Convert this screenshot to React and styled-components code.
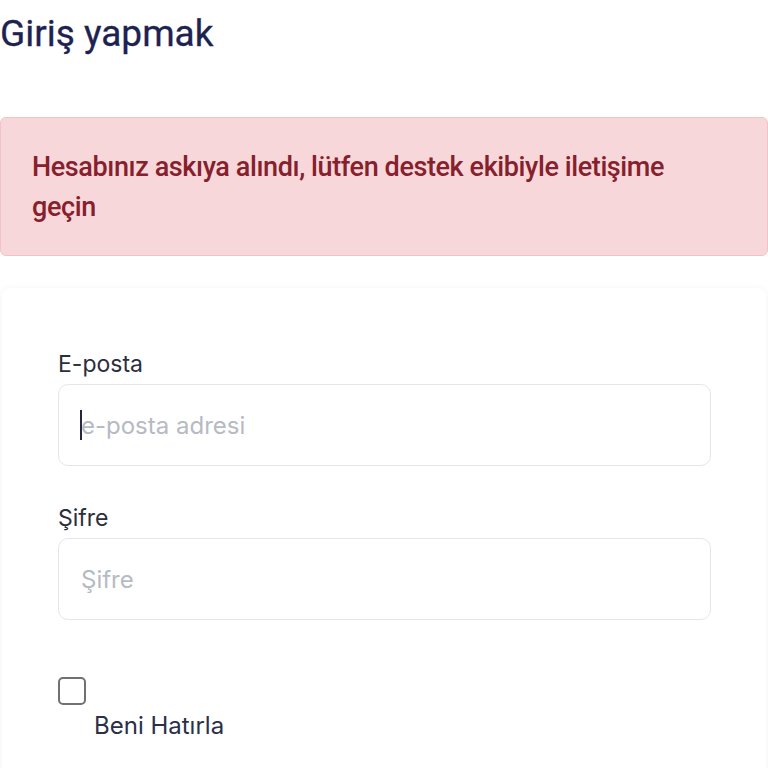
import React from "react";
import styled, { createGlobalStyle } from "styled-components";

const Global = createGlobalStyle`
  html, body { margin: 0; padding: 0; background: #ffffff; }
  body { font-family: Roboto, "Liberation Sans", sans-serif; }
  * { box-sizing: border-box; }
`;

const Page = styled.div`
  width: 768px;
  display: flex;
  flex-direction: column;
`;

const Title = styled.h1`
  margin: 14px 0 0 0;
  font-family: Roboto, "Liberation Sans", sans-serif;
  font-weight: 400;
  font-size: 37px;
  line-height: 40px;
  color: #1d2351;
  -webkit-text-stroke: 0.3px #1d2351;
`;

const Alert = styled.div`
  margin-top: 63px;
  padding: 29px 90px 28px 31px;
  background: #f8d7da;
  border: 1px solid #f3c2c6;
  border-radius: 6px;
  color: #86202d;
  font-family: Roboto, "Liberation Sans", sans-serif;
  font-weight: 500;
  font-size: 27px;
  line-height: 40px;
  letter-spacing: -0.4px;
`;

const Card = styled.div`
  margin: 32px 2px 0 2px;
  padding: 61px 55px 40px 56px;
  background: #ffffff;
  border-radius: 8px;
  box-shadow: 0 0 6px rgba(0, 0, 0, 0.05);
  display: flex;
  flex-direction: column;
`;

const Field = styled.div`
  display: flex;
  flex-direction: column;
  gap: 5px;
  margin-bottom: ${(p) => p.$mb || 0}px;
`;

const Label = styled.label`
  font-family: Inter, "Liberation Sans", sans-serif;
  font-size: 23px;
  line-height: 30px;
  color: #2b2f3b;
`;

const InputWrap = styled.div`
  position: relative;
`;

const Input = styled.input`
  width: 100%;
  height: 82px;
  border: 1px solid #e4e6ea;
  border-radius: 10px;
  padding: 0 0 0 22px;
  font-family: Inter, "Liberation Sans", sans-serif;
  font-size: 24px;
  color: #2b2f3b;
  outline: none;
  background: #fff;
  &::placeholder { color: #b6bac3; }
`;

const Caret = styled.span`
  position: absolute;
  left: 22px;
  top: 26px;
  width: 2px;
  height: 30px;
  background: #232840;
`;

const CheckRow = styled.div`
  margin-top: 57px;
  display: flex;
  flex-direction: column;
`;

const Box = styled.span`
  width: 28px;
  height: 28px;
  border: 2px solid #717174;
  border-radius: 5px;
  display: block;
`;

const CheckLabel = styled.span`
  margin: 6px 0 0 36px;
  font-family: Inter, "Liberation Sans", sans-serif;
  font-size: 24px;
  line-height: 30px;
  color: #2b2f4a;
`;

export default function App() {
  return (
    <Page>
      <Global />
      <Title>Giriş yapmak</Title>
      <Alert>Hesabınız askıya alındı, lütfen destek ekibiyle iletişime geçin</Alert>
      <Card>
        <Field $mb={37}>
          <Label>E-posta</Label>
          <InputWrap>
            <Input placeholder="e-posta adresi" />
            <Caret />
          </InputWrap>
        </Field>
        <Field>
          <Label>Şifre</Label>
          <Input type="password" placeholder="Şifre" />
        </Field>
        <CheckRow>
          <Box />
          <CheckLabel>Beni Hatırla</CheckLabel>
        </CheckRow>
      </Card>
    </Page>
  );
}
